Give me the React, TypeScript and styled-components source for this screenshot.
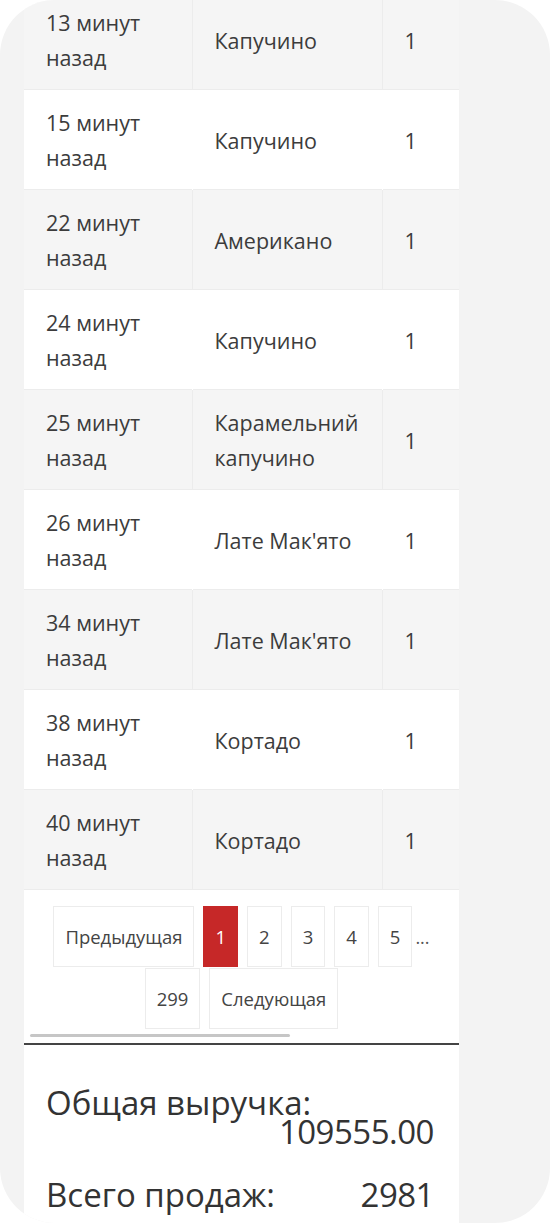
import React from "react";
import styled, { createGlobalStyle } from "styled-components";

const Global = createGlobalStyle`
  html, body { margin: 0; padding: 0; background: #ffffff; }
  body { font-family: "Open Sans", "Noto Sans", sans-serif; color: #333; }
  * { box-sizing: border-box; }
`;

const Frame = styled.div`
  width: 550px;
  height: 1223px;
  background: #f3f3f3;
  border-radius: 55px;
  overflow: hidden;
  padding: 0 91px 0 24px;
`;

const Panel = styled.div`
  margin-top: -10px;
  background: #ffffff;
  min-height: 1240px;
`;

const Table = styled.table`
  width: 100%;
  border-collapse: collapse;
  table-layout: fixed;
`;

const Col = styled.col<{ $w: number }>`
  width: ${(p) => p.$w}px;
`;

const Row = styled.tr<{ $striped: boolean }>`
  background: ${(p) => (p.$striped ? "#f5f5f5" : "#ffffff")};
  border-bottom: 1px solid #ececec;
`;

const Cell = styled.td<{ $striped: boolean; $last?: boolean }>`
  padding: 15px 6px 14px 22px;
  font-size: 21.5px;
  line-height: 35px;
  color: #3c3c3c;
  vertical-align: middle;
  border-right: ${(p) =>
    p.$last ? "none" : `1px solid ${p.$striped ? "#ececec" : "#ffffff"}`};
`;

const Pager = styled.div`
  padding: 16px 14px 0;
  display: flex;
  flex-wrap: wrap;
  justify-content: center;
  align-items: center;
  column-gap: 9px;
  row-gap: 1px;
`;

const PageBtn = styled.div<{ $active?: boolean }>`
  height: 61px;
  padding: 0 11px;
  display: flex;
  align-items: center;
  justify-content: center;
  border: 1px solid ${(p) => (p.$active ? "#c62828" : "#ececec")};
  background: ${(p) => (p.$active ? "#c62828" : "#ffffff")};
  color: ${(p) => (p.$active ? "#ffffff" : "#444")};
  font-size: 18.5px;
`;

const Dots = styled.span`
  margin-left: -6px;
  font-size: 18px;
  color: #555;
`;

const ScrollTrack = styled.div`
  padding: 5px 6px 6px;
`;

const ScrollThumb = styled.div`
  width: 260px;
  height: 3px;
  border-radius: 2px;
  background: #c6c6c6;
`;

const Divider = styled.div`
  height: 2px;
  background: #444;
`;

const Totals = styled.div`
  padding: 43px 25px 0 22px;
  display: flex;
  flex-direction: column;
  gap: 34px;
`;

const TotalRow = styled.div`
  display: flex;
  flex-wrap: wrap;
  justify-content: space-between;
  font-size: 33px;
  line-height: 29px;
  color: #333;
`;

const TotalValue = styled.span`
  margin-left: auto;
  letter-spacing: -0.5px;
`;

const rows = [
  ["13 минут назад", "Капучино", "1"],
  ["15 минут назад", "Капучино", "1"],
  ["22 минут назад", "Американо", "1"],
  ["24 минут назад", "Капучино", "1"],
  ["25 минут назад", "Карамельний капучино", "1"],
  ["26 минут назад", "Лате Мак'ято", "1"],
  ["34 минут назад", "Лате Мак'ято", "1"],
  ["38 минут назад", "Кортадо", "1"],
  ["40 минут назад", "Кортадо", "1"],
];

export default function App() {
  return (
    <>
      <Global />
      <Frame>
        <Panel>
          <Table>
            <colgroup>
              <Col $w={168} />
              <Col $w={190} />
              <Col $w={77} />
            </colgroup>
            <tbody>
              {rows.map((r, i) => {
                const s = i % 2 === 0;
                return (
                  <Row key={i} $striped={s}>
                    <Cell $striped={s}>{r[0]}</Cell>
                    <Cell $striped={s}>{r[1]}</Cell>
                    <Cell $striped={s} $last>
                      {r[2]}
                    </Cell>
                  </Row>
                );
              })}
            </tbody>
          </Table>
          <Pager>
            <PageBtn>Предыдущая</PageBtn>
            <PageBtn $active>1</PageBtn>
            <PageBtn>2</PageBtn>
            <PageBtn>3</PageBtn>
            <PageBtn>4</PageBtn>
            <PageBtn>5</PageBtn>
            <Dots>...</Dots>
            <PageBtn>299</PageBtn>
            <PageBtn>Следующая</PageBtn>
          </Pager>
          <ScrollTrack>
            <ScrollThumb />
          </ScrollTrack>
          <Divider />
          <Totals>
            <TotalRow>
              <span>Общая выручка:</span>
              <TotalValue>109555.00</TotalValue>
            </TotalRow>
            <TotalRow>
              <span>Всего продаж:</span>
              <TotalValue>2981</TotalValue>
            </TotalRow>
          </Totals>
        </Panel>
      </Frame>
    </>
  );
}
